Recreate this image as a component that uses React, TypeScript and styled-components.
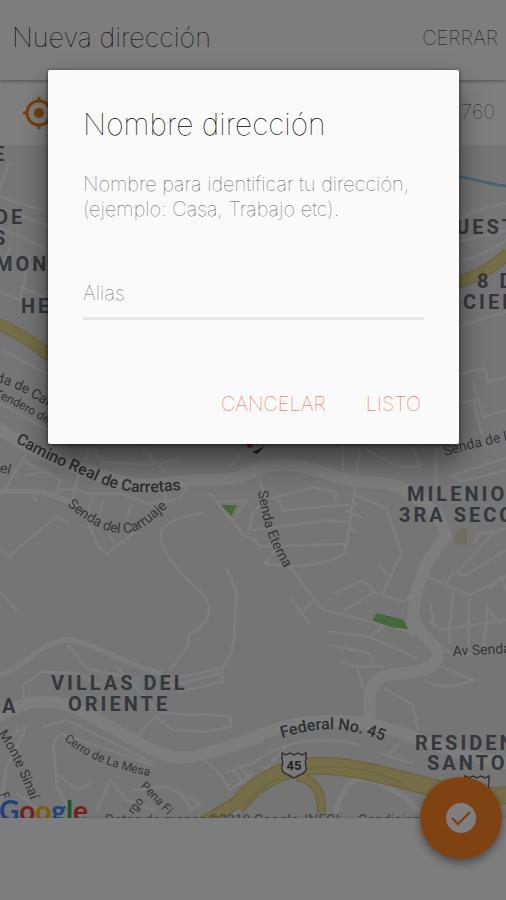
import React from "react";
import styled, { createGlobalStyle } from "styled-components";

const GlobalStyle = createGlobalStyle`
  *, *::before, *::after { box-sizing: border-box; }
  body {
    margin: 0;
    background: #fafafa;
    font-family: Inter, "Liberation Sans", sans-serif;
    font-weight: 100;
  }
  button, input { font: inherit; }
`;

const Screen = styled.div`
  position: relative;
  display: flex;
  flex-direction: column;
  min-height: 100vh;
  overflow: hidden;
`;

const AppBar = styled.header`
  position: relative;
  display: flex;
  align-items: center;
  justify-content: space-between;
  height: 80px;
  padding: 0 8px 4px 12px;
  background: #fafafa;
  box-shadow: 0 1px 4px rgba(0, 0, 0, 0.4);
`;

const ScreenTitle = styled.h1`
  margin: 0;
  color: #000;
  font-size: 27px;
  font-weight: 100;
  line-height: 32px;
`;

const TextButton = styled.button<{ $tone: "dark" | "accent" }>`
  padding: 0;
  border: 0;
  background: none;
  color: ${({ $tone }) => ($tone === "accent" ? "#f4511c" : "#111")};
  font-size: 20px;
  line-height: 24px;
  cursor: pointer;
`;

const AddressBar = styled.div`
  display: flex;
  align-items: center;
  height: 65px;
  padding: 0 11px 0 22px;
  background: #fff;
`;

const AddressInput = styled.input`
  flex: 1;
  min-width: 0;
  padding: 0 0 2px;
  border: 0;
  outline: 0;
  background: none;
  color: #555;
  font-size: 20px;
  text-align: right;
`;

const MapArea = styled.main`
  display: flex;
  flex: 1;
  min-height: 480px;
  background: #ebebeb;
`;

const MapDrawing = styled.svg`
  display: block;
  flex: 1;
  width: 100%;
  height: auto;
`;

const BottomBar = styled.footer`
  position: relative;
  height: 82px;
  background: #fafafa;
  box-shadow: 0 -1px 2px rgba(0, 0, 0, 0.1);
`;

const ConfirmButton = styled.button`
  position: absolute;
  top: -41px;
  right: 4px;
  display: grid;
  place-items: center;
  width: 82px;
  height: 82px;
  padding: 0;
  border: 0;
  border-radius: 50%;
  background: #ff8426;
  box-shadow: 0 4px 8px rgba(0, 0, 0, 0.4);
  cursor: pointer;
`;

const Overlay = styled.div`
  position: absolute;
  inset: 0;
  display: flex;
  align-items: flex-start;
  justify-content: center;
  padding: 70px 47px 0 48px;
  background: rgba(0, 0, 0, 0.5);
`;

const Dialog = styled.form`
  display: flex;
  flex: 1;
  flex-direction: column;
  max-width: 560px;
  padding: 36px 35px 28px;
  border-radius: 2px;
  background: #fafafa;
  box-shadow: 0 16px 28px rgba(0, 0, 0, 0.5), 0 1px 4px rgba(0, 0, 0, 0.6);
`;

const DialogTitle = styled.h2`
  margin: 0;
  color: #000;
  font-size: 30px;
  font-weight: 100;
  line-height: 36px;
`;

const DialogText = styled.p`
  margin: 30px 0 0;
  color: #555;
  font-size: 20px;
  line-height: 25px;
`;

const AliasInput = styled.input`
  width: 100%;
  height: 52px;
  margin-top: 46px;
  padding: 0;
  border: 0;
  border-bottom: 3px solid #e6e6e6;
  border-radius: 0;
  outline: 0;
  background: none;
  color: #333;
  font-size: 20px;
  &::placeholder { color: #666; opacity: 1; }
`;

const Actions = styled.div`
  display: flex;
  justify-content: flex-end;
  gap: 40px;
  margin-top: 72px;
  padding-right: 3px;
`;

const Road = styled.path<{ $size?: "minor" | "mid" | "major" }>`
  fill: none;
  stroke: #fafafa;
  stroke-linecap: round;
  stroke-linejoin: round;
  stroke-width: ${({ $size }) => ($size === "major" ? 36 : $size === "mid" ? 16 : 8)};
`;

const Highway = styled.path<{ $edge?: boolean; $w: number }>`
  fill: none;
  stroke: ${({ $edge }) => ($edge ? "#d9c87c" : "#eadb90")};
  stroke-width: ${({ $w }) => $w}px;
`;

const District = styled.text`
  fill: #687078;
  font-family: Roboto, sans-serif;
  font-size: 20px;
  font-weight: 700;
  letter-spacing: 3px;
`;

const streetSizes = { main: 16, street: 14, lane: 12 };

const Street = styled.text<{ $kind?: keyof typeof streetSizes }>`
  fill: ${({ $kind }) => ($kind === "main" ? "#5c6062" : "#6c6c6c")};
  font-family: Roboto, sans-serif;
  font-size: ${({ $kind = "street" }) => streetSizes[$kind]}px;
  font-weight: ${({ $kind }) => ($kind === "main" ? 500 : 400)};
`;

const Logo = styled.text`
  font-family: Lato, sans-serif;
  font-size: 28px;
  font-weight: 700;
`;

const Legal = styled.text`
  fill: #888;
  font-family: Roboto, sans-serif;
  font-size: 14px;
  font-weight: 400;
`;

const TargetIcon = () => (
  <svg width="34" height="34" viewBox="0 0 34 34" fill="none" stroke="#f58412" strokeWidth="3" aria-hidden="true">
    <circle cx="17" cy="17" r="12" />
    <circle cx="17" cy="17" r="5" fill="#f58412" stroke="none" />
    <path d="M17 1v5M17 28v5M1 17h5M28 17h5" />
  </svg>
);

const CheckIcon = () => (
  <svg width="30" height="30" viewBox="0 0 30 30" aria-hidden="true">
    <circle cx="15" cy="15" r="15" fill="#fff" />
    <path d="M6 15l6 6L24 9" fill="none" stroke="#ff8426" strokeWidth="2.4" />
  </svg>
);

const Shield = ({ x, y, label }: { x: number; y: number; label: string }) => (
  <g transform={`translate(${x} ${y})`}>
    <path
      d="M-12 -12l4 2 4-2 4 2 4-2 4 2 4-2v6c-2 4 1 8 0 11-1 4-6 4-12 8-6-4-11-4-12-8-1-3 2-7 0-11z"
      fill="#f4f4f4"
      stroke="#666"
      strokeWidth="1.5"
    />
    <text y="5" textAnchor="middle" fontFamily="Roboto" fontSize="13" fontWeight="700" fill="#444">
      {label}
    </text>
  </g>
);

const CityMap = () => (
  <MapDrawing viewBox="0 145 506 673" preserveAspectRatio="xMidYMid slice" role="img" aria-label="Mapa">
    <defs>
      <path id="carretas" d="M15 442C48 462 68 468 98 482S150 493 200 488" />
      <path id="carruaje" d="M67 505C88 524 108 534 125 533S150 522 180 496" />
      <path id="eterna" d="M258 491C262 520 267 542 292 580" />
      <path id="federal" d="M282 738C320 726 348 724 400 748" />
      <path id="mesa" d="M64 740C83 756 108 769 165 779" />
      <path id="sinai" d="M-2 734C10 751 20 772 35 812" />
      <path id="pena" d="M140 787C150 796 160 808 180 827" />
      <path id="lomas" d="M445 456C466 450 484 445 550 432" />
      <path id="cala" d="M-5 382C16 386 30 396 75 423" />
      <path id="tendero" d="M-6 397C12 403 30 413 75 441" />
    </defs>

    <rect y="145" width="506" height="673" fill="#ebebeb" />

    <g transform="translate(0 140) scale(.33333)">
      <Road d="M25 70L0 150M0 170L140 215M0 265L140 325M0 205L140 255M30 325L0 390M90 345L60 480M0 455L60 480M60 440L140 475M10 632L140 700M0 790L160 880" />
      <Highway $edge $w={38} d="M-10 550Q90 595 150 650" />
      <Highway $w={30} d="M-10 550Q90 595 150 650" />
    </g>

    <g transform="translate(440 140) scale(.33333)">
      <path d="M50 108C100 115 150 135 200 138" fill="none" stroke="#8bc4ec" strokeWidth="8" />
      <Road d="M40 250Q100 205 200 190M50 560L200 515M60 305L200 270M60 700L135 685 145 725 200 712M100 730L130 830 200 810M60 790L100 780 125 880M60 360Q130 350 200 300" />
      <Highway $edge $w={38} d="M40 430Q130 410 205 340" />
      <Highway $w={30} d="M40 430Q130 410 205 340" />
    </g>

    <g transform="translate(0 430) scale(.33333)">
      <Road $size="major" d="M-20 -20C80 65 200 105 330 145S500 150 600 150 700 150 800 110" />
      <Road $size="mid" d="M0 185H130L230 225" />
      <Road d="M75 75L15 180M65 90L180 150 170 195M80 135L140 125M240 120L215 215M265 55L250 120M100 190L108 210M130 200Q190 160 260 190H360L440 220 500 215M280 200L260 260 290 345 320 372 400 310 450 260M350 345L330 320M310 210L300 250M395 225L380 260M500 215L490 170 450 175M500 215L540 205 560 170M0 350L25 382 170 258 205 280M0 485L55 548M610 248C560 260 480 270 482 320S540 430 595 480 625 570 595 600M680 415L710 490 703 600M630 190L735 320 759 325M650 215L740 212 695 275M759 250L745 310M280 65L310 95 440 105 530 90M430 55L490 120M690 110L720 75" />
      <path d="M662 225h50l-18 33z" fill="#97cf78" />
      <circle cx="750" cy="44" r="9" fill="#e03030" />
      <path d="M757 66L795 48 772 72z" fill="#444" />
    </g>

    <g transform="translate(253 430) scale(.33333)">
      <Road $size="major" d="M-20 130C80 80 160 110 250 140S410 140 480 195 560 250 580 320C525 380 475 470 480 600" />
      <Road d="M20 145L35 200 0 255M270 50V120M320 50L305 180M305 180L280 350M60 205L180 172 250 185 245 215M75 205L90 240 310 222M0 300L220 272 280 275M0 325L20 350 275 342V370Q240 400 110 410L35 400 80 345M110 410L210 540 455 600M115 510L170 580M150 540L180 515M280 245L325 260M285 285L310 310M305 195L400 235 445 370 390 490M380 410L405 435M245 490L330 450 370 490 455 515M275 540L360 490M590 135L625 155 759 120M600 135L759 85M610 430L720 310 759 295M610 430L640 435 759 360M665 340L680 310 720 305M600 425L580 465 520 440 455 515M580 465L650 495 759 440M600 490L590 600M650 495L645 600M700 600V530L740 580M710 475L745 440 759 480M530 515L545 590M340 60L440 110 500 110 480 50M550 60V170" />
      <path d="M370 550l80 18 16 30-50-6-58-20z" fill="#8fd07b" />
      <path d="M610 300l35-8-5 55-38-5z" fill="#e6d9c2" />
    </g>

    <g transform="translate(0 620) scale(.33333)">
      <Road $size="mid" d="M0 165C80 140 130 60 200 60S350 125 480 160" />
      <Road $size="major" d="M-20 300C50 245 110 240 180 250S400 370 480 400 620 400 780 350" />
      <Road d="M70 240V195L125 155 230 160 300 195M205 75L260 145 420 180M350 140L480 280 650 285 690 290 695 320 620 335 520 330 465 290 415 345M510 150L565 75V50L620 0M703 0Q710 90 665 145L500 180 540 215 670 185 665 145M540 190L665 160M130 320L200 300 460 430M455 435L300 380 180 340 160 370 170 500 200 555M170 460L230 510 270 490M0 570L20 440 75 330M75 320L40 340 20 385M50 520L120 570M290 570L330 480 380 540 460 570M400 510L500 500 600 550 570 570M540 520L570 560M610 420L650 450 690 510 759 460M680 455L759 430M700 450L730 490M720 440L750 475" />
      <Highway $edge $w={38} d="M590 620Q690 560 780 500" />
      <Highway $w={30} d="M590 620Q690 560 780 500" />
    </g>

    <g transform="translate(253 620) scale(.33333)">
      <Road $size="major" d="M480 -10C490 50 575 70 550 120S440 150 390 170 350 240 350 300" />
      <Road $size="major" d="M-20 365C80 310 190 290 330 310S500 380 759 430" />
      <Road $size="mid" d="M250 570C280 470 310 455 400 500S470 560 520 590" />
      <Road d="M225 35L350 50 490 115M350 50L390 20M230 75L350 100 360 130M265 125L310 140 390 140M310 140L330 200M520 185Q590 215 660 180L570 140M560 90L590 95M395 205L480 255 495 330M0 430C100 350 230 350 320 375M380 400L480 430M410 400L440 370M590 0V70M650 0L645 90M700 0L690 80M530 0L560 30 759 0M0 490L100 380M610 105L680 100" />
      <Highway $edge $w={54} d="M-50 560C20 470 120 430 230 438S440 480 570 510 720 525 780 525" />
      <Highway $w={46} d="M-50 560C20 470 120 430 230 438S440 480 570 510 720 525 780 525" />
      <Highway $edge $w={4} d="M-30 560C40 480 120 440 230 440S400 470 450 490" />
      <Highway $edge $w={28} d="M130 470Q210 480 205 580" />
      <Highway $w={20} d="M130 470Q210 480 205 580" />
    </g>

    <District x="-7" y="161">E</District>
    <District x="-5" y="224">DE</District>
    <District x="-7" y="245">S</District>
    <District x="-5" y="271">MON</District>
    <District x="21" y="313">HE</District>
    <District x="456" y="234">UESTA</District>
    <District x="477" y="288">8 DE</District>
    <District x="463" y="309">CIEN</District>
    <District x="407" y="501">MILENIO</District>
    <District x="399" y="522">3RA SECC</District>
    <District x="51" y="690">VILLAS DEL</District>
    <District x="68" y="711">ORIENTE</District>
    <District x="2" y="713">A</District>
    <District x="415" y="750">RESIDEN</District>
    <District x="427" y="770">SANTO</District>

    <Street $kind="main"><textPath href="#carretas">Camino Real de Carretas</textPath></Street>
    <Street><textPath href="#carruaje">Senda del Carruaje</textPath></Street>
    <Street><textPath href="#eterna">Senda Eterna</textPath></Street>
    <Street $kind="main"><textPath href="#federal">Federal No. 45</textPath></Street>
    <Street $kind="lane"><textPath href="#mesa">Cerro de La Mesa</textPath></Street>
    <Street><textPath href="#sinai">Monte Sinaí</textPath></Street>
    <Street $kind="lane"><textPath href="#pena">Pena Fi</textPath></Street>
    <Street><textPath href="#lomas">Senda de Lo</textPath></Street>
    <Street><textPath href="#cala">da de Cala</textPath></Street>
    <Street $kind="lane"><textPath href="#tendero">Tendero de</textPath></Street>
    <Street x="-1" y="472" transform="rotate(15 0 472)">el</Street>
    <Street x="453" y="656" transform="rotate(-3 453 656)">Av Senda</Street>
    <Street $kind="lane" x="133" y="815" transform="rotate(-50 133 815)">rgo</Street>
    <Street $kind="lane" x="0" y="794" transform="rotate(70 0 794)">F</Street>

    <Shield x={294} y={765} label="45" />
    <Shield x={477} y={788} label="45" />
    <Logo x="-1" y="821">
      <tspan fill="#4285f4">G</tspan>
      <tspan fill="#ea4335">o</tspan>
      <tspan fill="#fbbc05">o</tspan>
      <tspan fill="#4285f4">g</tspan>
      <tspan fill="#34a853">l</tspan>
      <tspan fill="#ea4335">e</tspan>
    </Logo>
    <Legal x="105" y="825">Datos de mapas</Legal>
    <Legal x="208" y="825">©2018 Google, INEGI</Legal>
    <Legal x="358" y="825">Condiciones</Legal>
  </MapDrawing>
);

export default function App() {
  return (
    <>
      <GlobalStyle />
      <Screen>
        <AppBar>
          <ScreenTitle>Nueva dirección</ScreenTitle>
          <TextButton $tone="dark" type="button">CERRAR</TextButton>
        </AppBar>
        <AddressBar>
          <TargetIcon />
          <AddressInput aria-label="Dirección" defaultValue="760" />
        </AddressBar>
        <MapArea>
          <CityMap />
        </MapArea>
        <BottomBar>
          <ConfirmButton type="button" aria-label="Confirmar">
            <CheckIcon />
          </ConfirmButton>
        </BottomBar>
        <Overlay>
          <Dialog role="dialog" aria-modal="true" aria-labelledby="dialog-title" onSubmit={(e) => e.preventDefault()}>
            <DialogTitle id="dialog-title">Nombre dirección</DialogTitle>
            <DialogText>Nombre para identificar tu dirección, (ejemplo: Casa, Trabajo etc).</DialogText>
            <AliasInput aria-label="Alias" placeholder="Alias" />
            <Actions>
              <TextButton $tone="accent" type="button">CANCELAR</TextButton>
              <TextButton $tone="accent" type="submit">LISTO</TextButton>
            </Actions>
          </Dialog>
        </Overlay>
      </Screen>
    </>
  );
}
